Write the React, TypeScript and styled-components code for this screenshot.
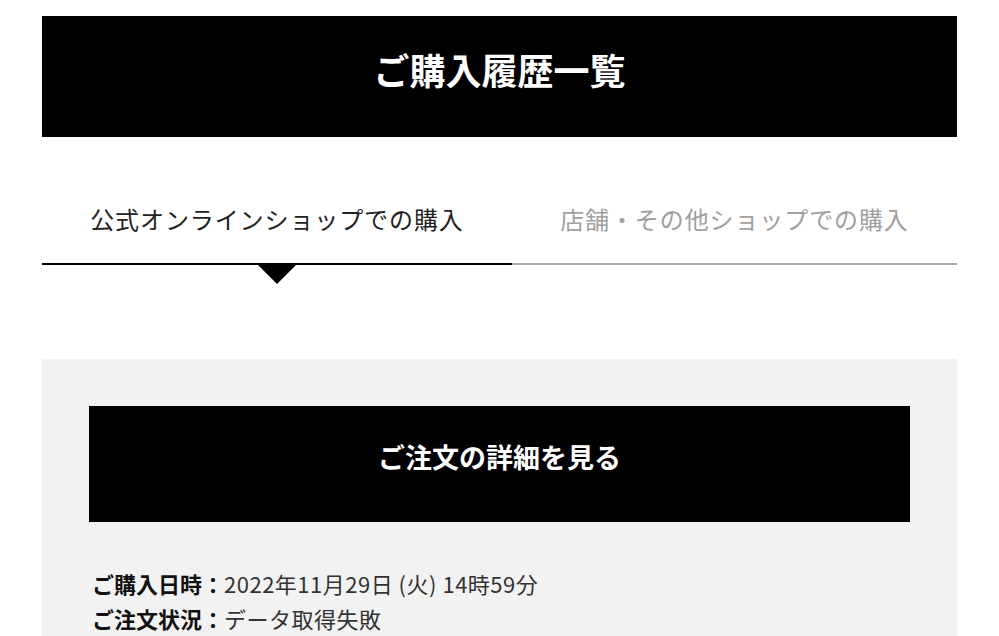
import { useState } from "react";
import styled, { createGlobalStyle } from "styled-components";

const GlobalStyle = createGlobalStyle`
  body {
    margin: 0;
    background: #fff;
    font-family: "Noto Sans CJK JP", "Noto Sans", sans-serif;
    color: #222;
  }
`;

const StyledPage = styled.div`
  padding: 16px 42px 0;
`;

const StyledHeader = styled.h1`
  margin: 0;
  height: 121px;
  box-sizing: border-box;
  padding-bottom: 16px;
  background: #000;
  color: #fff;
  font-size: 36px;
  font-weight: 700;
  display: flex;
  align-items: center;
  justify-content: center;
`;

const StyledTabs = styled.div`
  display: flex;
  margin-top: 64px;
`;

const StyledTab = styled.button<{ $active: boolean }>`
  flex: 1 1 auto;
  position: relative;
  background: none;
  border: none;
  border-bottom: 2px solid ${({ $active }) => ($active ? "#000" : "#a8a8a8")};
  padding: 0 0 26px;
  font-family: inherit;
  font-size: 24px;
  letter-spacing: 0.9px;
  line-height: 36px;
  color: ${({ $active }) => ($active ? "#222" : "#a0a0a0")};
  cursor: pointer;

  &::after {
    content: "";
    display: ${({ $active }) => ($active ? "block" : "none")};
    position: absolute;
    left: 50%;
    bottom: -21px;
    transform: translateX(-50%);
    border-left: 19px solid transparent;
    border-right: 19px solid transparent;
    border-top: 19px solid #000;
  }
`;

const StyledCard = styled.div`
  margin-top: 94px;
  background: #f2f2f2;
  padding: 47px 47px 40px;
`;

const StyledDetailButton = styled.button`
  display: flex;
  align-items: center;
  justify-content: center;
  width: 100%;
  height: 116px;
  box-sizing: border-box;
  padding: 0 0 16px;
  background: #000;
  border: none;
  color: #fff;
  font-family: inherit;
  font-size: 27px;
  font-weight: 700;
  cursor: pointer;
`;

const StyledInfo = styled.dl`
  margin: 44px 0 0 3px;
  font-size: 22px;
  line-height: 35px;
`;

const StyledInfoRow = styled.div`
  display: flex;
`;

const StyledLabel = styled.dt`
  font-weight: 700;
  color: #111;
`;

const StyledValue = styled.dd`
  margin: 0;
  color: #333;
  letter-spacing: 0.5px;
`;

const tabs = ["公式オンラインショップでの購入", "店舗・その他ショップでの購入"];

const orderInfo = [
  { label: "ご購入日時：", value: "2022年11月29日 (火) 14時59分" },
  { label: "ご注文状況：", value: "データ取得失敗" },
];

const App = () => {
  const [activeTab, setActiveTab] = useState(0);

  return (
    <StyledPage>
      <GlobalStyle />
      <StyledHeader>ご購入履歴一覧</StyledHeader>
      <StyledTabs>
        {tabs.map((tab, index) => (
          <StyledTab
            key={tab}
            $active={index === activeTab}
            onClick={() => setActiveTab(index)}
          >
            {tab}
          </StyledTab>
        ))}
      </StyledTabs>
      <StyledCard>
        <StyledDetailButton>ご注文の詳細を見る</StyledDetailButton>
        <StyledInfo>
          {orderInfo.map((item) => (
            <StyledInfoRow key={item.label}>
              <StyledLabel>{item.label}</StyledLabel>
              <StyledValue>{item.value}</StyledValue>
            </StyledInfoRow>
          ))}
        </StyledInfo>
      </StyledCard>
    </StyledPage>
  );
};

export default App;
